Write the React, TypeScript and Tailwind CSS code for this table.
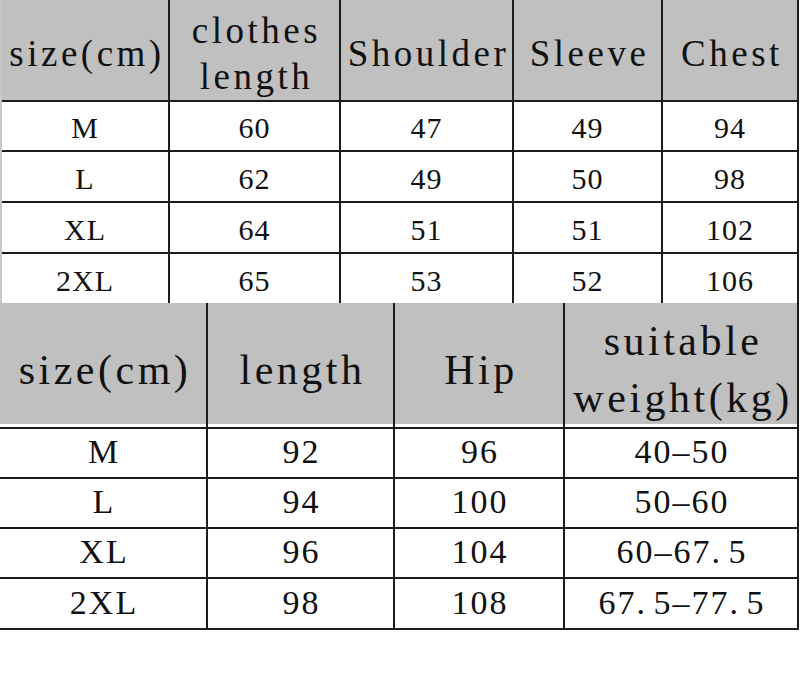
import React from "react";

const topHeader = [["size(cm)"], ["clothes", "length"], ["Shoulder"], ["Sleeve"], ["Chest"]];
const topRows = [
  ["M", "60", "47", "49", "94"],
  ["L", "62", "49", "50", "98"],
  ["XL", "64", "51", "51", "102"],
  ["2XL", "65", "53", "52", "106"],
];

const bottomHeader = [["size(cm)"], ["length"], ["Hip"], ["suitable", "weight(kg)"]];
const bottomRows = [
  ["M", "92", "96", "40-50"],
  ["L", "94", "100", "50-60"],
  ["XL", "96", "104", "60-67.5"],
  ["2XL", "98", "108", "67.5-77.5"],
];

const line = "border-r-2 border-[#1c1c1c]";

// full-width style dots and dashes, like the original sheet font
function Value({ text }: { text: string }) {
  return (
    <>
      {text.split("").map((c, i) =>
        c === "." ? (
          <span key={i} className="inline-block w-[0.5em]">
            .
          </span>
        ) : c === "-" ? (
          <span key={i}>–</span>
        ) : (
          <span key={i}>{c}</span>
        )
      )}
    </>
  );
}

export default function App() {
  return (
    <div className="w-[800px] h-[700px] bg-white text-[#111] font-['Liberation_Serif','Times_New_Roman',serif]">
      {/* upper table: tops */}
      <div className="w-[799px] border-l-2 border-l-[#c8c8c8]">
        <div className="grid grid-cols-[168px_171px_173px_149px_136px] h-[101px] bg-[#c0c0c0]">
          {topHeader.map((lines, i) => (
            <div
              key={i}
              className={`${line} border-b-2 flex flex-col items-center justify-center pt-[8px] pl-[4px] text-[37px] leading-[46px] tracking-[3.5px]`}
            >
              {lines.map((t) => (
                <span key={t}>{t}</span>
              ))}
            </div>
          ))}
        </div>
        {topRows.map((row, r) => (
          <div
            key={r}
            className={
              r === topRows.length - 1
                ? "grid grid-cols-[168px_171px_173px_149px_136px] h-[49px]"
                : "grid grid-cols-[168px_171px_173px_149px_136px] h-[51px]"
            }
          >
            {row.map((t, i) => (
              <div
                key={i}
                className={
                  r === topRows.length - 1
                    ? `${line} flex items-center justify-center pt-[4px] text-[30px] tracking-[1px]`
                    : `${line} border-b-2 flex items-center justify-center pt-[4px] text-[30px] tracking-[1px]`
                }
              >
                {t}
              </div>
            ))}
          </div>
        ))}
      </div>

      {/* lower table: pants */}
      <div className="w-[799px]">
        <div className="grid grid-cols-[208px_187px_170px_234px] h-[121px] bg-[#c0c0c0]">
          {bottomHeader.map((lines, i) => (
            <div
              key={i}
              className={`${line} border-b-2 flex flex-col items-center justify-center pt-[10px] pl-[4px] text-[42px] leading-[57px] tracking-[3.5px]`}
            >
              {lines.map((t) => (
                <span key={t}>{t}</span>
              ))}
            </div>
          ))}
        </div>
        {bottomRows.map((row, r) => (
          <div
            key={r}
            className={
              r === bottomRows.length - 1
                ? "grid grid-cols-[208px_187px_170px_234px] h-[56px]"
                : "grid grid-cols-[208px_187px_170px_234px] h-[50px]"
            }
          >
            {row.map((t, i) => (
              <div
                key={i}
                className={`${line} border-b-2 flex items-center justify-center pt-[2px] pl-[2px] text-[34px] tracking-[2px]`}
              >
                <Value text={t} />
              </div>
            ))}
          </div>
        ))}
      </div>
    </div>
  );
}
